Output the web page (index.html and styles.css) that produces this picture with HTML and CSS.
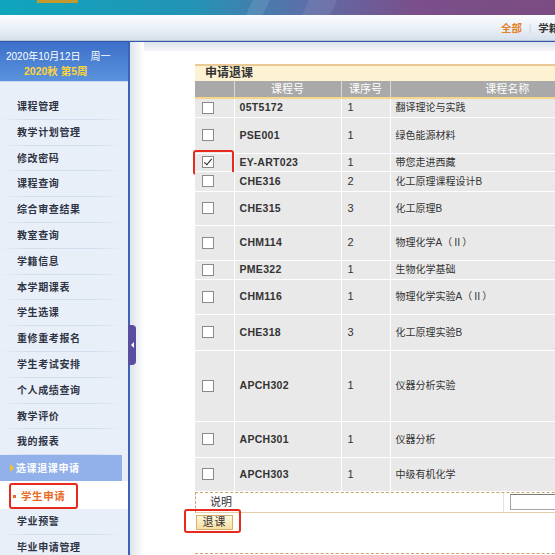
FILE: index.html
```html
<!DOCTYPE html>
<html lang="zh">
<head>
<meta charset="utf-8">
<title>申请退课</title>
<link rel="stylesheet" href="styles.css">
</head>
<body>
<div class="header">
  <div class="logo"></div>
</div>
<div class="nav">
  <span class="nav-all">全部</span>
  <span class="nav-sep">|</span>
  <span class="nav-item">学籍管理</span>
</div>
<div class="main">
  <aside class="sidebar">
    <div class="datebox">
      <div class="date">2020年10月12日<span class="day">周一</span></div>
      <div class="week">2020秋 第5周</div>
    </div>
    <ul class="menu">
      <li>课程管理</li>
      <li>教学计划管理</li>
      <li>修改密码</li>
      <li>课程查询</li>
      <li>综合审查结果</li>
      <li>教室查询</li>
      <li>学籍信息</li>
      <li>本学期课表</li>
      <li>学生选课</li>
      <li>重修重考报名</li>
      <li>学生考试安排</li>
      <li>个人成绩查询</li>
      <li>教学评价</li>
      <li>我的报表</li>
      <li class="active"><span class="arrow"></span>选课退课申请</li>
      <li class="sub"><span class="sub-box"><span class="bullet"></span>学生申请</span></li>
      <li>学业预警</li>
      <li>毕业申请管理</li>
    </ul>
  </aside>
  <div class="toggle"><span class="toggle-arrow"></span></div>
  <section class="content">
    <div class="panel">
      <div class="title">申请退课</div>
      <table class="grid">
        <colgroup>
          <col class="c-check"><col class="c-code"><col class="c-seq"><col class="c-name">
        </colgroup>
        <thead>
          <tr><th></th><th>课程号</th><th>课序号</th><th>课程名称</th></tr>
        </thead>
        <tbody>
          <tr class="h19"><td class="cb"><span class="box"></span></td><td class="code">05T5172</td><td>1</td><td class="name">翻译理论与实践</td></tr>
          <tr class="h36"><td class="cb"><span class="box"></span></td><td class="code">PSE001</td><td>1</td><td class="name">绿色能源材料</td></tr>
          <tr class="h18"><td class="cb"><span class="box checked"></span><span class="mark"></span></td><td class="code">EY-ART023</td><td>1</td><td class="name">带您走进西藏</td></tr>
          <tr class="h20"><td class="cb"><span class="box"></span></td><td class="code">CHE316</td><td>2</td><td class="name">化工原理课程设计B</td></tr>
          <tr class="h34"><td class="cb"><span class="box"></span></td><td class="code">CHE315</td><td>3</td><td class="name">化工原理B</td></tr>
          <tr class="h35"><td class="cb"><span class="box"></span></td><td class="code">CHM114</td><td>2</td><td class="name">物理化学A（Ⅱ）</td></tr>
          <tr class="h19"><td class="cb"><span class="box"></span></td><td class="code">PME322</td><td>1</td><td class="name">生物化学基础</td></tr>
          <tr class="h35"><td class="cb"><span class="box"></span></td><td class="code">CHM116</td><td>1</td><td class="name">物理化学实验A（Ⅱ）</td></tr>
          <tr class="h36"><td class="cb"><span class="box"></span></td><td class="code">CHE318</td><td>3</td><td class="name">化工原理实验B</td></tr>
          <tr class="h71"><td class="cb"><span class="box"></span></td><td class="code">APCH302</td><td>1</td><td class="name">仪器分析实验</td></tr>
          <tr class="h36"><td class="cb"><span class="box"></span></td><td class="code">APCH301</td><td>1</td><td class="name">仪器分析</td></tr>
          <tr class="h34"><td class="cb"><span class="box"></span></td><td class="code">APCH303</td><td>1</td><td class="name">中级有机化学</td></tr>
        </tbody>
      </table>
      <div class="note">
        <div class="note-label">说明</div>
        <div class="note-field"><span class="note-input"></span></div>
      </div>
      <div class="actions">
        <span class="btn-wrap"><button class="btn" type="button">退课</button></span>
      </div>
      <div class="dash"></div>
    </div>
  </section>
</div>
</body>
</html>
```

FILE: styles.css
```css
* { box-sizing: border-box; }
html, body { margin: 0; padding: 0; }
body {
  width: 555px;
  height: 555px;
  overflow: hidden;
  font-family: "Liberation Sans", Arial, "Noto Sans CJK SC", sans-serif;
  font-size: 11px;
  color: #333;
  background: #fff;
}

.header {
  height: 15px;
  background:
    linear-gradient(115deg, transparent 0 45%, rgba(255,255,255,0.10) 45% 48%, transparent 48% 55%, rgba(255,255,255,0.08) 55% 60%, transparent 60%),
    linear-gradient(90deg, #0fa6bd 0%, #2393b6 35%, #5d6ea8 55%, #7a4f8a 75%, #7b4c82 100%);
  position: relative;
}
.logo {
  position: absolute;
  left: 37px;
  top: 0;
  width: 41px;
  height: 3px;
  background: #c49a2c;
}

.nav {
  height: 26px;
  background: linear-gradient(#fbfcfe, #e8eef6 60%, #d6e0ec);
  border-bottom: 1px solid #b8c6d8;
  display: flex;
  align-items: center;
  padding-left: 501px;
  font-weight: bold;
  font-size: 10.5px;
  white-space: nowrap;
  overflow: hidden;
  gap: 7px;
}
.nav-all { color: #e3832a; }
.nav-sep { color: #c8ccd2; font-weight: normal; font-size: 9px; }
.nav-item { color: #333; }

.main {
  display: flex;
  position: relative;
  height: 514px;
}

.sidebar {
  width: 130px;
  flex: none;
  background: #e9eff9;
  border-right: 2px solid #3a63b8;
  border-top: 1px solid #2f55a8;
}
.datebox {
  height: 40px;
  background: linear-gradient(#3d6fc9, #5a93dc);
  color: #fff;
  padding-top: 7px;
  border-bottom: 1px solid #c9d7ee;
  white-space: nowrap;
}
.date { font-size: 10px; line-height: 15px; padding-left: 6px; }
.day { margin-left: 10px; }
.week { font-size: 10.5px; line-height: 15px; color: #ffd43a; font-weight: bold; padding-left: 24px; }

.menu {
  list-style: none;
  margin: 0;
  padding: 12px 0 0;
}
.menu li {
  height: 25.8px;
  line-height: 25px;
  padding-left: 17px;
  font-weight: bold;
  letter-spacing: 0.6px;
  color: #2e3444;
  font-size: 10px;
  background: linear-gradient(90deg, transparent, #d3deee 20%, #d3deee 80%, transparent) bottom / 100% 1px no-repeat;
  margin-right: 6px;
  white-space: nowrap;
}
.menu li.active {
  background: #92b1ea;
  color: #fff;
  padding-left: 10px;
  display: flex;
  align-items: center;
  gap: 2px;
}
.arrow {
  width: 0;
  height: 0;
  border-left: 4px solid #f6c320;
  border-top: 4px solid transparent;
  border-bottom: 4px solid transparent;
}
.menu li.sub {
  background: #fff;
  color: #ea6a25;
  padding-left: 9px;
  height: 28px;
  padding-top: 1px;
  margin-right: 0;
}
.sub-box {
  display: inline-flex;
  align-items: center;
  gap: 5px;
  width: 69px;
  height: 26px;
  border: 2px solid #e82a1e;
  border-radius: 3px;
  padding-left: 2px;
  line-height: 20px;
  font-size: 10.5px;
}
.bullet {
  width: 3px;
  height: 3px;
  background: #ea6a25;
}

.toggle {
  position: absolute;
  left: 128px;
  top: 284px;
  width: 8px;
  height: 40px;
  background: #5a4ea0;
  border-radius: 0 4px 4px 0;
  display: flex;
  align-items: center;
  justify-content: center;
}
.toggle-arrow {
  width: 0;
  height: 0;
  border-right: 3px solid #fff;
  border-top: 3px solid transparent;
  border-bottom: 3px solid transparent;
}

.content {
  flex: 1;
  background:
    linear-gradient(90deg, #dfe3ea, #ffffff 14px) left / 14px 100% no-repeat,
    linear-gradient(#dde3ec, #f2f4f7 8px) top / 100% 9px no-repeat,
    #fff;
  border-top: 1px solid #2f55a8;
  padding: 22px 0 0 65px;
  overflow: hidden;
}
.panel { width: 430px; }

.title {
  height: 17px;
  background: #fdf2d2;
  border-top: 2px solid #ebc995;
  font-weight: bold;
  font-size: 12px;
  line-height: 15px;
  padding-left: 10px;
  color: #333;
}

.grid {
  width: 100%;
  border-collapse: collapse;
  table-layout: fixed;
}
.c-check { width: 39px; }
.c-code { width: 107px; }
.c-seq { width: 49px; }
.grid th {
  height: 17px;
  background: #a9a9a9;
  color: #fff;
  font-weight: normal;
  font-size: 11px;
  padding: 0;
  border-right: 1px solid #d8d8d8;
  border-bottom: 2px solid #f6d68a;
  line-height: 14px;
}
.grid td {
  background: #e9e9e9;
  border-right: 1px solid #fff;
  border-bottom: 1px solid #fff;
  padding: 0 0 0 6px;
  font-size: 11px;
  color: #333;
  vertical-align: middle;
  line-height: 13px;
}
.grid td.cb { padding-left: 7px; position: relative; }
.grid td.code { font-weight: bold; font-size: 10.5px; letter-spacing: 0.3px; padding-left: 5px; }
.grid td.name { font-size: 10px; padding-left: 5px; }
.h18 { height: 18px; }
.h19 { height: 19px; }
.h20 { height: 20px; }
.h34 { height: 34px; }
.h35 { height: 35px; }
.h36 { height: 36px; }
.h71 { height: 71px; }

.box {
  display: block;
  width: 12px;
  height: 12px;
  border: 1px solid #8a8a8a;
  background: #fff;
  position: relative;
}
.box.checked::after {
  content: "";
  position: absolute;
  left: 3px;
  top: 0px;
  width: 3px;
  height: 7px;
  border: solid #222;
  border-width: 0 1.5px 1.5px 0;
  transform: rotate(40deg);
}
.mark {
  position: absolute;
  left: -2px;
  top: -4px;
  width: 41px;
  height: 25px;
  border: 2px solid #e82a1e;
  border-radius: 3px;
}

.note {
  display: flex;
  height: 21px;
  border-top: 1px dashed #c9a36b;
  border-left: 1px dashed #c9a36b;
  border-bottom: 1px solid #e6cfa8;
  background: #fff;
}
.note-label {
  width: 308px;
  padding-left: 14px;
  line-height: 19px;
  font-size: 11px;
  color: #333;
  height: 19px;
  overflow: hidden;
  border-right: 1px solid #e2e2e2;
}
.note-field { padding: 1px 0 0 6px; }
.note-input {
  display: block;
  width: 80px;
  height: 16px;
  border: 1px solid #a5a5a5;
  border-top-color: #7a7a7a;
  background: #fff;
}

.actions {
  height: 40px;
  padding: 2px 0 0 1px;
}
.btn-wrap {
  position: relative;
  display: inline-block;
}
.btn-wrap::after {
  content: "";
  position: absolute;
  left: -12px;
  right: -8px;
  top: -6px;
  bottom: -3px;
  border: 2px solid #e82a1e;
  border-radius: 3px;
}
.btn {
  display: block;
  width: 37px;
  height: 15px;
  padding: 0;
  margin: 0;
  border: 1px solid #d7b06c;
  background: linear-gradient(#fff6dc, #f7dfa3);
  font-family: "Liberation Sans", "Noto Sans CJK SC", sans-serif;
  font-size: 11px;
  line-height: 13px;
  color: #333;
  letter-spacing: 1px;
}
.dash {
  border-top: 1px dashed #c9a36b;
}
```
